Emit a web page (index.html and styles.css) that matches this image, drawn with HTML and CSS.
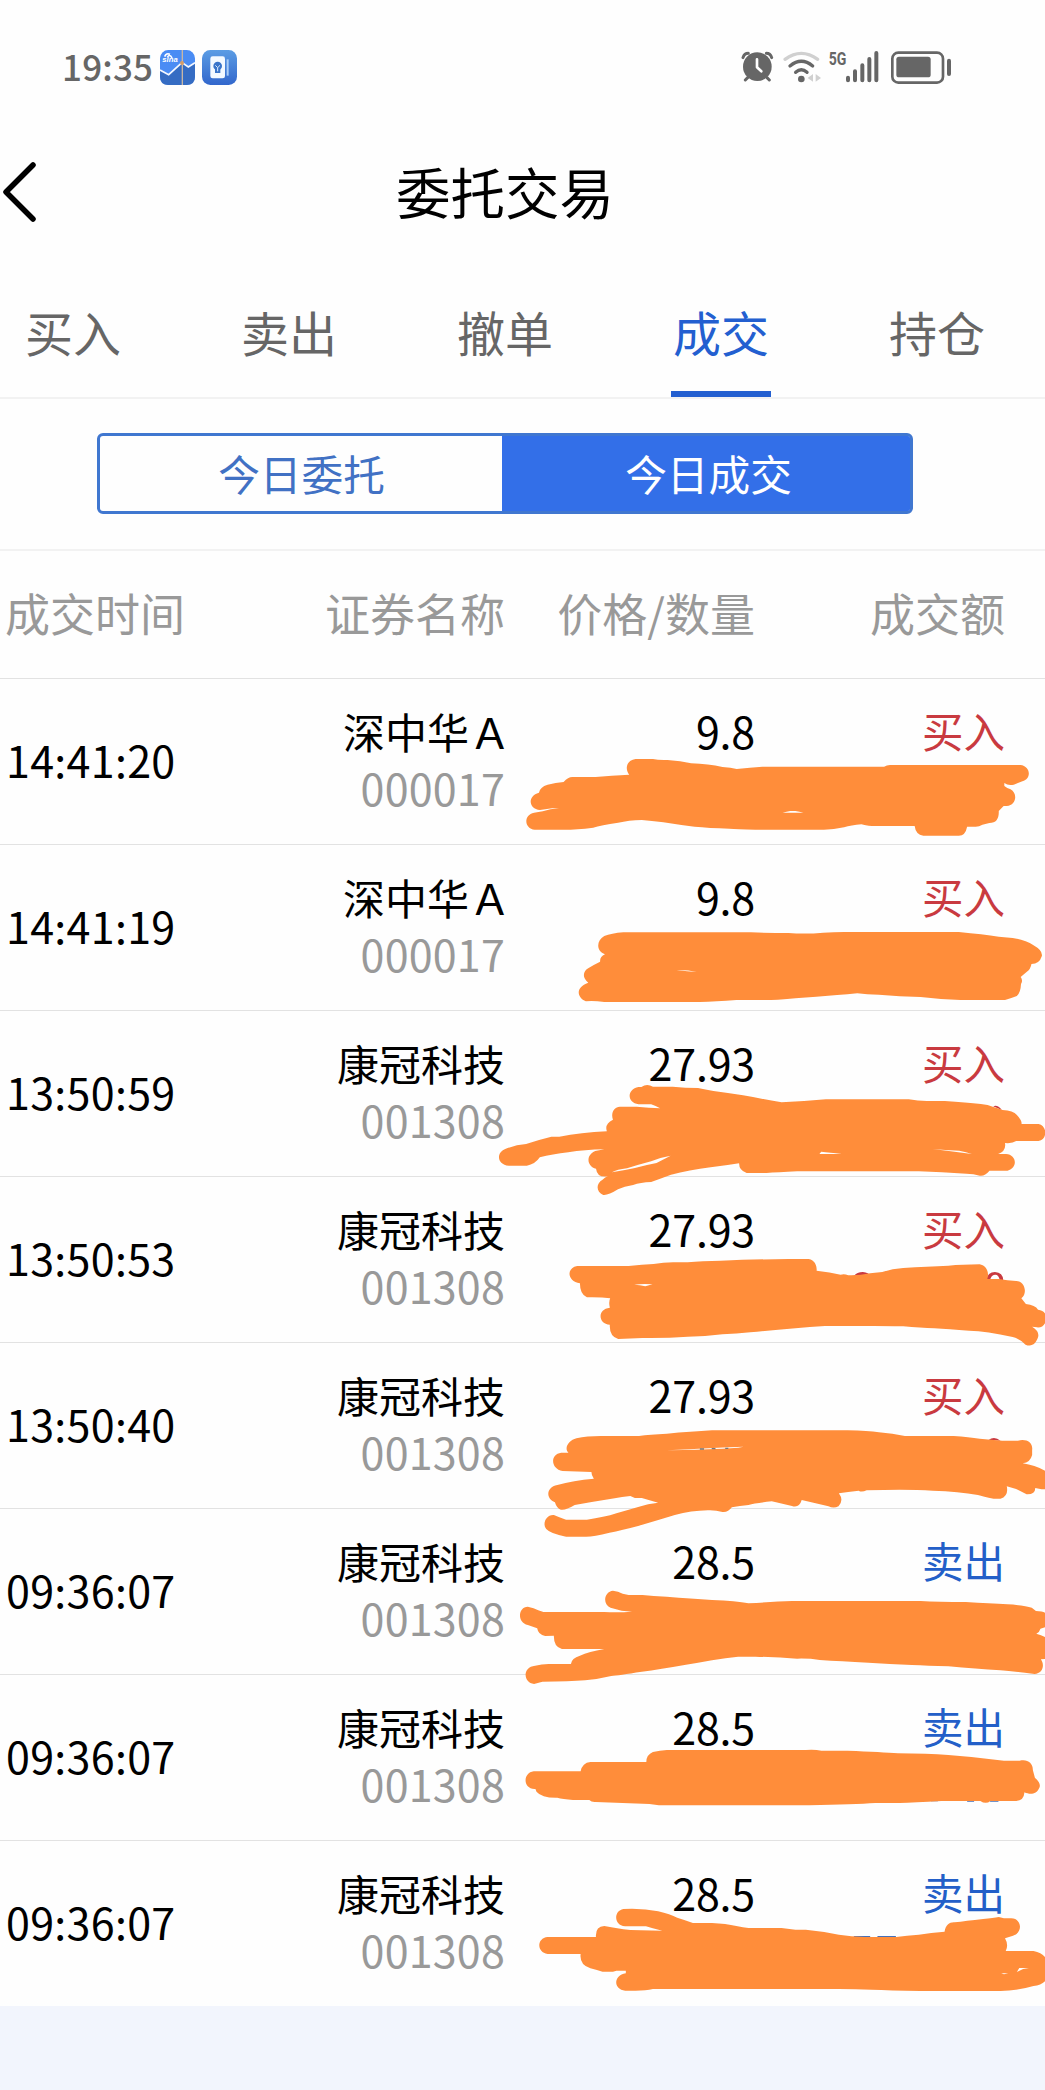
FILE: index.html
```
<!DOCTYPE html>
<html lang="zh-CN">
<head>
  <meta charset="UTF-8">
  <title>委托交易</title>
  <link rel="stylesheet" href="styles.css">
</head>
<body>
  <div class="screen">
    <div class="status-bar">
      <span class="clock">19:35</span>
      <svg class="app-icon" viewBox="0 0 105 105">
        <defs>
          <linearGradient id="blue" x1="0" y1="0" x2="0" y2="1">
            <stop offset="0" stop-color="#5b9ce4"/>
            <stop offset="1" stop-color="#3267cc"/>
          </linearGradient>
        </defs>
        <rect width="105" height="105" rx="25" fill="#4a8cf4"/>
        <path d="M0 60 26 74 66 38 85 51 105 38V80Q105 105 80 105H25Q0 105 0 80Z" fill="#356cc3"/>
        <path d="M0 60 26 74 66 38 85 51 105 38" fill="none" stroke="#f4f8ff" stroke-width="5"/>
        <path d="M14 20Q19 8 30 13M22 22Q29 10 36 24" fill="none" stroke="#fff" stroke-width="5"/>
        <text x="7" y="37" class="sina">sina</text>
        <path d="M67 0V105" stroke="#c8b7a5" stroke-width="4"/>
        <circle cx="66" cy="39" r="6" fill="#d59c68"/>
      </svg>
      <svg class="app-icon second" viewBox="0 0 105 105">
        <rect width="105" height="105" rx="25" fill="url(#blue)"/>
        <rect x="25" y="19" width="44" height="66" rx="7" fill="#f3f9ff"/>
        <path d="M77 28V77" stroke="#a9cdf8" stroke-width="6"/>
        <circle cx="47" cy="48" r="13" fill="#3974c9"/>
        <path d="M39 56H55V69H39Z" fill="#3974c9"/>
        <path d="M40 46 47 53 54 46M47 53V64" fill="none" stroke="#dcecff" stroke-width="3"/>
      </svg>
      <svg class="signals" viewBox="0 0 780 225">
        <!-- alarm -->
        <g fill="none" stroke="#666" stroke-width="9" stroke-linecap="round">
          <path d="M69 83Q73 70 85 70M155 83Q151 70 139 70M83 143 76 150M141 143 148 150"/>
        </g>
        <circle cx="112" cy="110" r="43" fill="#666"/>
        <path d="M111 88V112L124 124" fill="none" stroke="#fff" stroke-width="8" stroke-linecap="round" stroke-linejoin="round"/>
        <!-- wifi -->
        <g fill="none" stroke="#666" stroke-width="10" stroke-linecap="round">
          <path d="M195 88Q244 52 293 88" stroke="#d0d0d0"/>
          <path d="M210 108Q244 80 278 108M227 127Q244 112 261 127"/>
        </g>
        <circle cx="244" cy="147" r="10" fill="#666"/>
        <path d="M279 132V155L263 144ZM287 132V155L303 144Z" fill="#d0d0d0"/>
        <!-- signal -->
        <text x="326" y="104" class="net" textLength="53" lengthAdjust="spacingAndGlyphs">5G</text>
        <g stroke="#666" stroke-width="12" stroke-linecap="round">
          <path d="M384 143V151M405 124V151M427 106V151M448 87V151M469 69V151"/>
        </g>
        <!-- battery -->
        <rect x="517" y="68" width="152" height="90" rx="18" fill="none" stroke="#666" stroke-width="8"/>
        <rect x="529" y="80" width="103" height="62" rx="8" fill="#666"/>
        <path d="M687 92V132" stroke="#666" stroke-width="12" stroke-linecap="round"/>
      </svg>
    </div>

    <div class="title-bar">
      <svg class="back" viewBox="0 0 40 62">
        <path d="M33 3 6 30 33 57" fill="none" stroke="#000" stroke-width="5.5" stroke-linecap="round" stroke-linejoin="round"/>
      </svg>
      <h1>委托交易</h1>
    </div>

    <div class="tabs">
      <div class="tab"><span>买入</span></div>
      <div class="tab"><span>卖出</span></div>
      <div class="tab"><span>撤单</span></div>
      <div class="tab active"><span>成交</span></div>
      <div class="tab"><span>持仓</span></div>
    </div>

    <div class="switch-wrap">
      <div class="switch">
        <div class="option">今日委托</div>
        <div class="option on">今日成交</div>
      </div>
    </div>

    <div class="row head">
      <div>成交时间</div>
      <div>证券名称</div>
      <div>价格/数量</div>
      <div>成交额</div>
    </div>

    <div class="list">
      <div class="row">
        <div class="time">14:41:20</div>
        <div>深中华<span class="share">Ａ</span><p class="code">000017</p></div>
        <div class="num">9.8</div>
        <div class="buy">买入</div>
      </div>
      <div class="row">
        <div class="time">14:41:19</div>
        <div>深中华<span class="share">Ａ</span><p class="code">000017</p></div>
        <div class="num">9.8</div>
        <div class="buy">买入</div>
      </div>
      <div class="row">
        <div class="time">13:50:59</div>
        <div>康冠科技<p class="code">001308</p></div>
        <div class="num">27.93</div>
        <div class="buy">买入</div>
      </div>
      <div class="row">
        <div class="time">13:50:53</div>
        <div>康冠科技<p class="code">001308</p></div>
        <div class="num">27.93</div>
        <div class="buy">买入</div>
      </div>
      <div class="row">
        <div class="time">13:50:40</div>
        <div>康冠科技<p class="code">001308</p></div>
        <div class="num">27.93</div>
        <div class="buy">买入</div>
      </div>
      <div class="row">
        <div class="time">09:36:07</div>
        <div>康冠科技<p class="code">001308</p></div>
        <div class="num">28.5</div>
        <div class="sell">卖出</div>
      </div>
      <div class="row">
        <div class="time">09:36:07</div>
        <div>康冠科技<p class="code">001308</p></div>
        <div class="num">28.5</div>
        <div class="sell">卖出</div>
      </div>
      <div class="row">
        <div class="time">09:36:07</div>
        <div>康冠科技<p class="code">001308</p></div>
        <div class="num">28.5</div>
        <div class="sell">卖出</div>
      </div>

      <!-- marker strokes over quantity and amount -->
      <svg class="marker" viewBox="0 0 1045 1328">
        <g transform="translate(500 2) scale(.34757 .33333)">
          <path d="M390 237H440Q456 241 482 240Q520 243 550 250Q600 252 640 261Q665 263 681 267Q720 262 755 260H1105Q1113 255 1122 255H1497C1527 258 1530 297 1503 304L1478 314Q1462 318 1451 309V318Q1459 325 1469 328C1490 340 1486 376 1458 378H1449L1435 393C1436 415 1428 429 1408 429L1388 434Q1377 441 1366 440H1344Q1339 467 1320 467H1218Q1196 464 1193 438H1070Q1050 437 1040 433Q1010 436 990 442Q960 449 932 449H735Q680 447 660 446Q600 444 560 440Q510 434 470 427Q435 422 408 420Q370 421 340 428Q290 436 268 443Q220 449 185 449H100C70 447 66 405 98 398Q125 395 145 388Q158 387 170 385H150L115 390C83 388 77 348 112 338Q115 321 137 314Q160 308 183 306Q196 291 208 291H275Q320 287 372 284C360 270 361 242 390 237Z"/>
          <path class="gap" d="M813 398Q825 395 835 393H850Q861 395 873 398Z"/>
        </g>
        <g transform="translate(500 172) scale(.34757 .33333)">
          <path d="M355 247H722Q780 249 830 249Q880 253 930 248Q960 246 990 246H1320Q1390 253 1435 260L1475 264Q1512 270 1535 286Q1562 302 1559 318Q1552 342 1529 342Q1527 357 1515 366L1498 381C1504 389 1502 398 1499 402Q1498 428 1487 438Q1470 445 1453 450H1325Q1270 448 1210 441Q1150 439 1090 434Q1055 434 1028 430Q1000 434 970 435Q910 440 850 445Q820 449 780 450H680Q620 455 575 456H300Q270 452 247 454C221 443 216 412 254 398C235 382 239 363 255 354Q270 344 288 335Q287 320 302 313C276 304 277 271 300 258Q320 250 355 247Z"/>
          <path class="gap" d="M508 360Q540 359 566 366Q540 365 508 360Z"/>
        </g>
        <g transform="translate(480 342) scale(.36033 .33333)">
          <path class="red" d="M1424 259Q1436 253 1448 270Z"/>
          <path d="M440 201H448Q463 189 480 200H535Q570 204 605 204Q625 208 648 213Q690 219 730 226Q775 235 837 247Q900 244 960 238H1190Q1215 243 1240 243H1290Q1350 247 1390 252Q1410 254 1425 261Q1440 266 1450 270Q1480 272 1490 285Q1504 301 1503 312H1550C1575 317 1575 359 1550 363H1488Q1478 371 1457 369Q1461 393 1438 402H1460C1488 403 1495 443 1464 452H1414Q1400 470 1387 467Q1370 461 1350 461Q1280 456 1218 454H880Q825 457 795 459H740Q719 452 719 430Q680 437 640 442Q580 450 530 464Q500 476 475 486Q445 487 425 495Q400 499 383 508Q355 527 342 525C322 517 321 490 340 479Q347 471 355 469Q325 474 322 446C296 439 293 405 320 393L345 388Q290 389 245 397Q200 403 166 412Q153 433 130 437H80C46 434 45 397 70 387Q98 374 128 372Q160 360 198 350H220Q280 338 352 334Q345 311 369 299C362 278 373 260 388 260H435Q470 264 500 265Q487 257 475 253H440C408 249 406 208 440 201Z"/>
          <path class="gap" d="M366 457Q380 448 408 445Q440 434 475 424Q500 412 529 407Q509 418 490 429Q460 435 430 444Q400 451 366 457ZM947 395Q970 398 1004 401Q980 403 942 402ZM1256 387Q1290 390 1330 392Q1350 396 1365 402Q1310 394 1256 387Z"/>
        </g>
        <g transform="translate(500 512) scale(.34757 .33333)">
          <path class="red" d="M1018 258Q1027 246 1044 246Q1061 247 1066 258ZM1399 270Q1403 246 1424 246Q1447 247 1448 271H1438Q1435 253 1424 254Q1412 256 1410 271Z"/>
          <path d="M222 228H370Q410 223 442 222Q470 218 498 217H540Q580 212 635 212Q730 208 830 207H888C907 210 912 229 911 242Q950 247 980 254Q991 251 1002 256Q1035 257 1065 250L1100 246Q1130 235 1160 234Q1230 229 1290 227Q1330 224 1380 223C1401 227 1408 249 1402 267H1435Q1460 272 1485 273C1510 273 1519 310 1500 325L1513 342Q1540 345 1548 359Q1571 361 1572 387Q1567 414 1545 412L1531 410Q1553 424 1548 442C1542 461 1530 472 1512 464Q1493 445 1475 441Q1400 423 1350 422Q1290 418 1250 415Q1210 413 1160 409Q1110 408 1075 408H935Q890 411 850 415Q780 421 720 427Q680 431 640 433Q590 440 540 440Q480 445 410 444L340 447Q314 439 316 404C282 402 279 357 316 353Q312 336 317 325Q290 321 250 322Q230 314 230 280C193 275 190 234 222 228Z"/>
          <path class="gap" d="M386 284Q410 281 439 283L418 289Q403 285 386 284Z"/>
        </g>
        <g transform="translate(500 672) scale(.34757 .33333)">
          <path class="red" d="M1406 269Q1423 257 1440 272Z"/>
          <path d="M220 265Q250 258 290 258H400Q430 253 480 251Q550 245 610 241H1000Q1060 243 1090 247Q1130 251 1165 258H1305Q1350 261 1380 266L1445 272H1490C1516 265 1534 279 1531 300V315Q1526 337 1504 340Q1540 346 1570 363V418H1558L1540 414Q1540 434 1515 433Q1499 424 1485 417L1458 409Q1464 438 1440 446H1420Q1390 440 1375 435Q1320 424 1245 422Q1170 417 1055 421Q1040 428 1032 422Q1000 426 975 430Q990 451 974 469Q960 476 945 469L868 450Q861 475 840 468L782 454Q735 459 715 465Q690 468 667 472Q656 488 640 486Q620 480 598 481Q550 482 503 495Q440 515 400 527Q350 541 315 548Q270 560 248 560H190Q145 551 133 537C121 522 132 493 155 495Q170 502 190 509H250Q300 502 335 490Q370 479 400 470Q425 461 455 458L408 444H388L375 438Q350 441 330 445Q270 455 215 465Q188 482 175 479Q163 475 158 457C132 447 131 412 165 405Q210 391 270 386Q263 376 263 366L180 363C147 359 142 313 176 308H197C183 294 198 271 220 265Z"/>
          <path class="gap" d="M480 301Q580 295 701 290L685 293Q590 299 530 300Z"/>
          <path class="ink" d="M575 297H587M609 296H620M648 295H657"/>
        </g>
        <g transform="translate(500 852) scale(.34757 .33333)">
          <path d="M325 182Q340 184 353 191L370 195H410Q440 198 480 200Q550 206 610 210Q680 213 715 220Q790 215 840 213H1210Q1260 216 1340 216Q1410 220 1460 223Q1510 226 1530 233L1542 243Q1568 244 1572 252V290L1555 296Q1553 305 1543 311Q1560 316 1572 323V387L1556 388C1568 405 1562 430 1538 432Q1480 424 1440 421Q1370 417 1290 409Q1230 407 1185 405Q1120 402 1060 398Q980 394 920 390Q890 385 855 386Q800 382 735 380H685Q650 384 610 391Q570 399 535 404Q460 418 408 425Q340 436 320 438Q280 448 245 451Q200 455 122 455L98 462C67 458 63 411 101 407Q120 402 140 402H204Q206 384 230 377Q255 365 300 357H178Q154 351 155 317L130 318Q110 315 107 295L80 285C47 277 53 230 80 230Q98 233 110 241L125 246H300Q340 248 380 245L350 242L318 233C292 220 302 184 325 182Z"/>
        </g>
        <g transform="translate(500 1012) scale(.34757 .33333)">
          <path class="blue" d="M1240 331H1260V334H1240ZM1299 331H1306V333H1299ZM1344 331H1364V335H1344ZM1410 331H1434V335H1410Z"/>
          <path d="M440 186Q460 181 480 180H880Q905 178 925 182H1000Q1100 186 1145 190Q1230 190 1290 195Q1370 201 1450 212H1495C1517 206 1534 219 1533 240L1539 263Q1559 282 1551 295C1544 313 1525 315 1509 307Q1507 333 1485 333H1411Q1398 344 1382 333H1270Q1190 338 1150 339H1080Q1020 343 890 346H457L430 342L275 336Q263 337 257 330H210Q180 327 165 323Q120 324 105 305L102 297C67 300 63 249 97 244H232Q237 218 260 216H421Q421 194 440 186Z"/>
        </g>
        <g transform="translate(500 1172) scale(.34757 .33333)">
          <path class="blue" d="M1018 258H1065V264H1018ZM1086 258H1139V264H1086Z"/>
          <path d="M355 177Q410 174 455 184Q490 193 510 203Q535 211 555 219H610Q650 221 680 228Q700 233 715 234H810L850 239H880Q930 244 975 254Q1010 260 1050 261H1140Q1170 257 1205 254Q1240 248 1279 245C1283 224 1293 216 1308 217Q1340 213 1390 207Q1420 204 1435 201L1450 205H1470C1501 204 1506 248 1476 257L1453 265Q1464 285 1455 303H1535Q1562 309 1572 327V389Q1560 405 1535 408Q1485 423 1440 423H1210Q1120 421 1070 419Q1010 416 940 417H440Q420 422 390 422H360C326 418 325 377 362 370V362H335L325 365H295Q280 361 260 355Q228 345 232 312H137C105 308 105 264 137 261H276Q274 229 300 228Q330 234 355 238L375 240L467 242Q440 236 420 229H360C326 226 327 182 355 177Z"/>
          <path class="gap" d="M1487 366L1494 354H1522L1505 357L1487 366ZM1442 370H1462L1450 373Z"/>
        </g>
      </svg>
    </div>
  </div>
</body>
</html>
```

FILE: styles.css
```
* {
  box-sizing: border-box;
}
body {
  margin: 0;
  min-height: 2090px;
  background: #f2f5fd;
  font-family: "Noto Sans CJK SC", "Noto Sans", sans-serif;
  color: #000;
  overflow: hidden;
}
/* 1080px wide screen, its left edge is cut off by 35px */
.screen {
  width: 1080px;
  margin-left: -35px;
  background: #fefefe;
}
.status-bar {
  display: flex;
  align-items: center;
  height: 135px;
  padding-left: 97px;
}
.clock {
  width: 98px;
  padding-bottom: 5px;
  font-size: 35px;
  font-weight: 500;
  letter-spacing: 0.2px;
  color: #666;
}
.app-icon {
  width: 35px;
  height: 35px;
}
.app-icon.second {
  margin-left: 7px;
}
.sina {
  font: italic bold 23px "Liberation Sans", sans-serif;
  fill: #fff;
}
.signals {
  width: 260px;
  height: 75px;
  margin-left: 483px;
}
.net {
  font: bold 53px "Roboto", sans-serif;
  fill: #666;
}
.title-bar {
  display: flex;
  align-items: center;
  height: 116px;
  padding: 0 35px;
}
.back {
  width: 40px;
  height: 62px;
}
h1 {
  flex: 1;
  margin: 0 40px 0 0;
  padding-bottom: 6px;
  font-size: 54.5px;
  font-weight: 400;
  text-align: center;
}
.tabs {
  display: grid;
  grid-template-columns: repeat(5, 1fr);
  height: 148px;
  border-bottom: 2px solid #f2f2f2;
}
.tab {
  display: flex;
  justify-content: center;
  font-size: 48px;
  color: #666;
}
.tab span {
  padding: 17px 2px 0;
  line-height: 126px;
  height: 146px;
}
.tab.active span {
  color: #235fd0;
  border-bottom: 6px solid #235fd0;
}
.switch-wrap {
  height: 152px;
  padding: 34px 132px 0;
  border-bottom: 2px solid #f2f2f2;
}
.switch {
  display: flex;
  height: 81px;
  border: 3px solid #4077d0;
  border-radius: 6px;
  overflow: hidden;
}
.option {
  flex: 1;
  padding-right: 2px;
  font-size: 41.7px;
  line-height: 74px;
  text-align: center;
  color: #4171c4;
}
.option.on {
  padding: 0 0 0 2px;
  background: #336fe8;
  color: #fff;
  box-shadow: 0 0 0 3px #336fe8;
}
.row {
  display: grid;
  grid-template-columns: repeat(4, 1fr);
  height: 166px;
  padding: 23px 40px 0;
  border-top: 1px solid #e2e2e2;
  font-size: 42px;
  line-height: 57px;
  text-align: right;
}
.row div:first-child {
  text-align: left;
}
.row.head {
  height: 127px;
  padding-top: 0;
  border-top: 0;
  font-size: 45px;
  line-height: 123px;
  color: #999;
}
.list {
  position: relative;
}
.time {
  padding-top: 29px;
}
.time, .num, .code {
  font-size: 43px;
  letter-spacing: -0.2px;
}
.row .time {
  padding-left: 1px;
  letter-spacing: 0.3px;
}
.code {
  margin: 0;
  letter-spacing: 0.2px;
  color: #999;
}
.share {
  margin-right: -6px;
}
.buy {
  color: #c93a40;
}
.sell {
  color: #235fc8;
}
.buy, .sell {
  font-size: 41.5px;
}
.marker {
  position: absolute;
  top: 0;
  left: 35px;
  width: 1045px;
  height: 1328px;
  fill: #ff8d3a;
}
.marker .gap {
  fill: #fefefe;
}
.marker .red {
  fill: #c93a40;
}
.marker .blue {
  fill: #4670b8;
}
.marker .ink {
  stroke: #777;
  stroke-width: 4;
}
```
